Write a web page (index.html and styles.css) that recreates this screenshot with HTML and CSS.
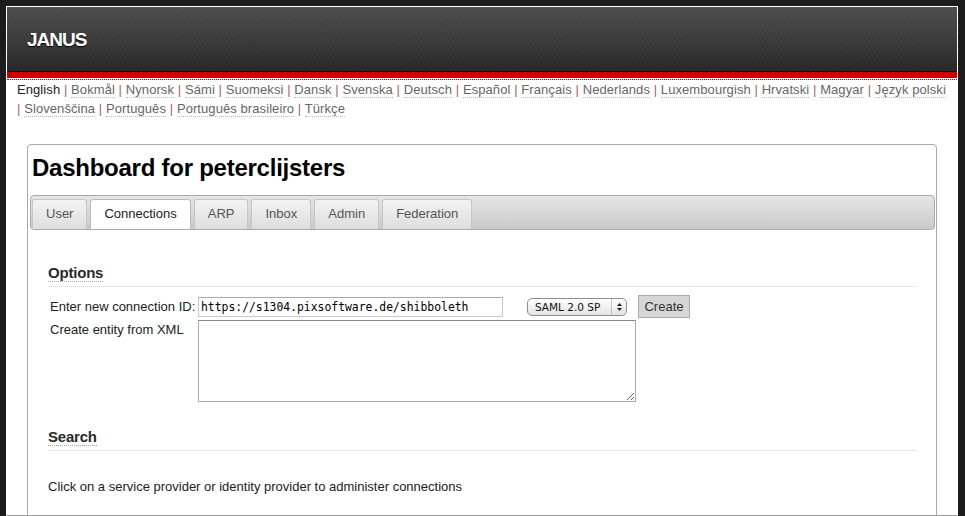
FILE: index.html
```html
<!DOCTYPE html>
<html lang="en">
<head>
<meta charset="utf-8">
<title>JANUS</title>
<link rel="stylesheet" href="styles.css">
</head>
<body>
<div class="window">
  <header class="topbar">
    <div class="brand">JANUS</div>
  </header>
  <div class="redbar"></div>
  <nav class="langs">
    <span class="current">English</span>
    <span class="lang"><span class="sep">|</span> <a href="#">Bokmål</a></span>
    <span class="lang"><span class="sep">|</span> <a href="#">Nynorsk</a></span>
    <span class="lang"><span class="sep">|</span> <a href="#">Sámi</a></span>
    <span class="lang"><span class="sep">|</span> <a href="#">Suomeksi</a></span>
    <span class="lang"><span class="sep">|</span> <a href="#">Dansk</a></span>
    <span class="lang"><span class="sep">|</span> <a href="#">Svenska</a></span>
    <span class="lang"><span class="sep">|</span> <a href="#">Deutsch</a></span>
    <span class="lang"><span class="sep">|</span> <a href="#">Español</a></span>
    <span class="lang"><span class="sep">|</span> <a href="#">Français</a></span>
    <span class="lang"><span class="sep">|</span> <a href="#">Nederlands</a></span>
    <span class="lang"><span class="sep">|</span> <a href="#">Luxembourgish</a></span>
    <span class="lang"><span class="sep">|</span> <a href="#">Hrvatski</a></span>
    <span class="lang"><span class="sep">|</span> <a href="#">Magyar</a></span>
    <span class="lang"><span class="sep">|</span> <a href="#">Język polski</a></span>
    <span class="lang"><span class="sep">|</span> <a href="#">Slovenščina</a></span>
    <span class="lang"><span class="sep">|</span> <a href="#">Português</a></span>
    <span class="lang"><span class="sep">|</span> <a href="#">Português brasileiro</a></span>
    <span class="lang"><span class="sep">|</span> <a href="#">Türkçe</a></span>
  </nav>

  <main class="box">
    <h1 class="title">Dashboard for peterclijsters</h1>
    <div class="tabbar">
      <a class="tab" href="#">User</a>
      <a class="tab active" href="#">Connections</a>
      <a class="tab" href="#">ARP</a>
      <a class="tab" href="#">Inbox</a>
      <a class="tab" href="#">Admin</a>
      <a class="tab" href="#">Federation</a>
    </div>

    <section class="panel">
      <h3 class="section-head"><span>Options</span></h3>
      <div class="form">
        <label class="form-label center">Enter new connection ID:</label>
        <div class="form-row">
          <input class="text-input" type="text" value="https://s1304.pixsoftware.de/shibboleth">
          <div class="select">
            <span class="select-text">SAML 2.0 SP</span>
            <span class="select-arrows">
              <svg width="7" height="10" viewBox="0 0 7 10"><path d="M3.5 1 L6 4 L1 4 Z" fill="#222"/><path d="M3.5 9 L6 6 L1 6 Z" fill="#222"/></svg>
            </span>
          </div>
          <button class="btn" type="button">Create</button>
        </div>
        <label class="form-label">Create entity from XML</label>
        <div class="form-row top">
          <textarea class="xml"></textarea>
        </div>
      </div>

      <h3 class="section-head search-head"><span>Search</span></h3>
      <p class="hint">Click on a service provider or identity provider to administer connections</p>
    </section>
  </main>
</div>
</body>
</html>
```

FILE: styles.css
```css
html, body {
  margin: 0;
  padding: 0;
}
body {
  background: #1c1c1c;
  font-family: "Liberation Sans", Arial, Helvetica, sans-serif;
  font-size: 13px;
  color: #222;
}
.window {
  margin: 6px 7px 0 6px;
  border: 1px solid #fff;
  border-bottom: 1px solid #9a9a9a;
  height: 508px;
  background: #fff;
  overflow: hidden;
}
.topbar {
  height: 64px;
  background:
    repeating-linear-gradient(60deg, rgba(255,255,255,0.025) 0 2px, rgba(0,0,0,0) 2px 4px),
    linear-gradient(#4d4d4d, #3a3a3a 50%, #262626);
  display: flex;
  align-items: center;
  padding-left: 20px;
  border-bottom: 1px solid #111;
}
.brand {
  color: #fff;
  font-weight: bold;
  font-size: 19px;
  letter-spacing: -1px;
  text-shadow: 0 1px 1px #000;
  margin-top: 2px;
}
.redbar {
  height: 6px;
  background: #cc0000;
  border-bottom: 1px solid #fff;
}
.langs {
  border-top: 1px dotted #c00;
  padding: 0 10px;
  line-height: 19px;
  font-size: 13px;
  letter-spacing: 0.08px;
  color: #333;
}
.langs .lang {
  white-space: nowrap;
}
.langs a {
  color: #666;
  text-decoration: none;
  border-bottom: 1px dotted #bbb;
}
.langs .current {
  color: #222;
}
.langs .sep {
  color: #b06060;
}
.box {
  display: block;
  margin: 26px 20px 0 20px;
  border: 1px solid #aaa;
  border-radius: 4px;
  padding: 9px 1px 40px 2px;
}
.title {
  margin: 0;
  padding-left: 2px;
  font-size: 24px;
  line-height: 28px;
  letter-spacing: -0.25px;
  font-weight: bold;
  color: #000;
}
.tabbar {
  margin-top: 13px;
  border: 1px solid #aaa;
  border-radius: 4px;
  background: linear-gradient(#e5e5e5, #cacaca);
  padding: 3px 2px 0 1px;
  display: flex;
  gap: 3px;
}
.tab {
  height: 29px;
  line-height: 28px;
  padding: 0 13px;
  border: 1px solid #c6c6c6;
  border-bottom: none;
  border-radius: 3px 3px 0 0;
  background: linear-gradient(#f2f2f2, #dedede);
  color: #555;
  text-decoration: none;
  font-size: 13px;
}
.tab.active {
  background: #fff;
  color: #222;
  border-color: #bbb;
}
.panel {
  padding: 0 18px;
}
.section-head {
  margin: 34px 0 0 0;
  padding-bottom: 4px;
  border-bottom: 1px solid #e8e8e8;
  font-size: 15px;
  line-height: 17px;
  letter-spacing: -0.2px;
  color: #2a2a2a;
}
.section-head span {
  display: inline-block;
  vertical-align: top;
  border-bottom: 1px dotted #aaa;
}
.search-head {
  margin-top: 26px;
}
.form {
  margin-top: 8px;
  padding-left: 2px;
  display: grid;
  grid-template-columns: 148px auto;
  row-gap: 2px;
}
.form-label {
  padding-top: 2px;
  line-height: 15px;
  font-size: 13px;
  color: #222;
}
.form-label.center {
  padding-top: 0;
  align-self: center;
}
.form-row {
  display: flex;
  align-items: center;
}
.form-row.top {
  align-items: flex-start;
}
.text-input {
  box-sizing: border-box;
  width: 305px;
  height: 20px;
  margin: 0;
  padding: 0 2px;
  border: 1px solid #c8c8c8;
  border-top-color: #aaa;
  font-family: "DejaVu Sans Mono", monospace;
  font-size: 11.4px;
  color: #000;
}
.select {
  box-sizing: border-box;
  margin-left: 24px;
  width: 100px;
  height: 18px;
  border: 1px solid #8f8f8f;
  border-radius: 5px;
  background: linear-gradient(#ffffff, #f1f1f1 50%, #e4e4e4);
  display: flex;
  align-items: center;
  font-family: "DejaVu Sans", sans-serif;
  font-size: 10.5px;
  color: #111;
}
.select-text {
  flex: 1;
  padding-left: 7px;
}
.select-arrows {
  width: 14px;
  height: 100%;
  border-left: 1px solid #c0c0c0;
  display: flex;
  align-items: center;
  justify-content: center;
}
.btn {
  margin: 0 0 0 11px;
  box-sizing: border-box;
  width: 52px;
  height: 23px;
  padding: 0;
  border: 1px solid #aaa;
  background: #d6d6d6;
  font-family: "Liberation Sans", Arial, sans-serif;
  font-size: 13px;
  color: #333;
}
.xml {
  box-sizing: border-box;
  width: 438px;
  height: 82px;
  margin: 0;
  border: 1px solid #aaa;
  border-top-color: #888;
  resize: both;
}
.hint {
  margin: 28px 0 0 0;
  line-height: 15px;
  font-size: 13px;
  color: #222;
}
```
